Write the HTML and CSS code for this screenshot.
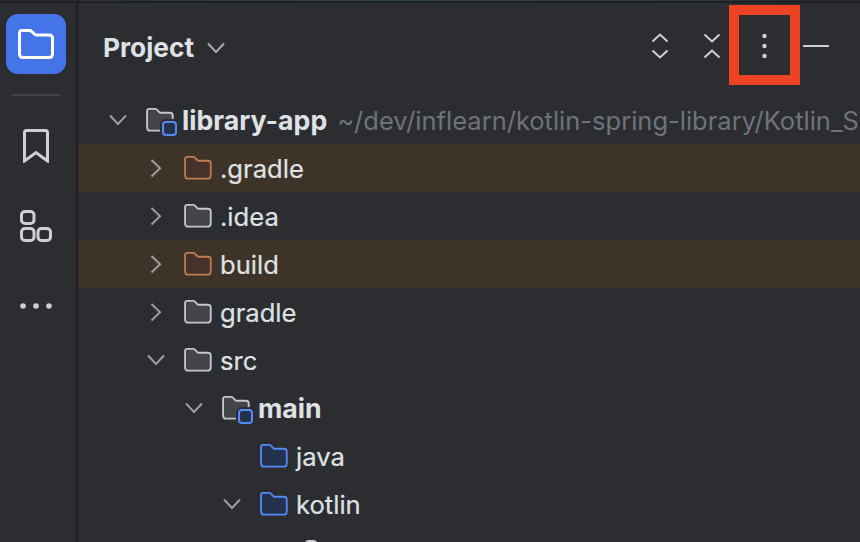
FILE: index.html
```html
<!DOCTYPE html>
<html lang="en">
<head>
<meta charset="utf-8">
<title>Project</title>
<link rel="stylesheet" href="styles.css">
</head>
<body>
<svg class="defs" width="0" height="0" aria-hidden="true">
  <defs>
    <symbol id="folder" viewBox="0 0 30 26">
      <path d="M3.2 1h6.4c.8 0 1.4.3 2 .8l2.6 2.7c.4.4.9.6 1.5.6h10.100c1.700 0 3 1.300 3 3V21c0 2-1.400 3.500-3.400 3.500H4.200C2.300 24.500 1 23 1 21V3.200C1 2 2 1 3.200 1Z"/>
    </symbol>
    <symbol id="chev-r" viewBox="0 0 12 20">
      <path d="M1.500 2 10 10.200 1.500 18.500"/>
    </symbol>
    <symbol id="chev-d" viewBox="0 0 20 12">
      <path d="M2 1.500 10 10 18 1.500"/>
    </symbol>
  </defs>
</svg>
<div class="topline"></div>
<div class="app">
  <aside class="rail">
    <button class="rail-active" type="button" aria-label="Project">
      <svg class="rail-folder" viewBox="0 0 36 30"><path d="M4 1.500h7.600c.8 0 1.400.3 2 .8l3 3c.5.500 1 .7 1.700.7H31c2.200 0 3.500 1.300 3.500 3.500v15.500c0 2.200-1.300 3.500-3.500 3.500H5c-2.200 0-3.500-1.300-3.500-3.500V4c0-1.500 1-2.500 2.500-2.500Z"/></svg>
    </button>
    <div class="rail-sep"></div>
    <svg class="rail-icon bookmark" viewBox="0 0 26 34"><path d="M1.500 3.500c0-1.100.9-2 2-2h19c1.100 0 2 .9 2 2V32L13 23.500 1.500 32Z"/></svg>
    <svg class="rail-icon structure" viewBox="0 0 32 32"><rect x="1.500" y="1.500" width="12.500" height="12" rx="3.500"/><rect x="1.500" y="18.500" width="12.500" height="12" rx="3.500"/><rect x="18" y="18.500" width="12.500" height="12" rx="3.500"/></svg>
    <svg class="rail-icon more" viewBox="0 0 32 6"><circle cx="3" cy="3" r="2.800"/><circle cx="16" cy="3" r="2.800"/><circle cx="29" cy="3" r="2.800"/></svg>
  </aside>
  <main class="panel">
    <header class="head">
      <span class="title">Project</span>
      <svg class="title-chev"><use href="#chev-d"/></svg>
      <span class="spacer"></span>
      <span class="slot"><svg class="tool" viewBox="0 0 18 26"><path d="M1.500 8.500 9 1.500l7.500 7M1.500 17.500l7.500 7 7.500-7"/></svg></span>
      <span class="slot"><svg class="tool" viewBox="0 0 18 26"><path d="M1.500 1.500 9 8.500l7.500-7M1.500 24.500 9 17.500l7.500 7"/></svg></span>
      <span class="slot">
        <svg class="dots" viewBox="0 0 5 26"><circle cx="2.500" cy="3" r="2.200"/><circle cx="2.500" cy="13" r="2.200"/><circle cx="2.500" cy="23" r="2.200"/></svg>
        <span class="callout"></span>
      </span>
      <span class="slot"><span class="minimize"></span></span>
    </header>
    <div class="tree">
      <div class="row lvl-0">
        <svg class="chev-d"><use href="#chev-d"/></svg>
        <span class="icon-wrap"><svg class="folder plain"><use href="#folder"/></svg><span class="badge"></span></span>
        <span class="name bold">library-app</span>
        <span class="path">~/dev/inflearn/kotlin-spring-library/Kotlin_S</span>
      </div>
      <div class="row lvl-1 excluded">
        <svg class="chev-r"><use href="#chev-r"/></svg>
        <svg class="folder orange"><use href="#folder"/></svg>
        <span class="name">.gradle</span>
      </div>
      <div class="row lvl-1">
        <svg class="chev-r"><use href="#chev-r"/></svg>
        <svg class="folder plain"><use href="#folder"/></svg>
        <span class="name">.idea</span>
      </div>
      <div class="row lvl-1 excluded">
        <svg class="chev-r"><use href="#chev-r"/></svg>
        <svg class="folder orange"><use href="#folder"/></svg>
        <span class="name">build</span>
      </div>
      <div class="row lvl-1">
        <svg class="chev-r"><use href="#chev-r"/></svg>
        <svg class="folder plain"><use href="#folder"/></svg>
        <span class="name">gradle</span>
      </div>
      <div class="row lvl-1">
        <svg class="chev-d"><use href="#chev-d"/></svg>
        <svg class="folder plain"><use href="#folder"/></svg>
        <span class="name">src</span>
      </div>
      <div class="row lvl-2">
        <svg class="chev-d"><use href="#chev-d"/></svg>
        <span class="icon-wrap"><svg class="folder plain"><use href="#folder"/></svg><span class="badge"></span></span>
        <span class="name bold">main</span>
      </div>
      <div class="row lvl-3">
        <span class="chev-gap"></span>
        <svg class="folder blue"><use href="#folder"/></svg>
        <span class="name">java</span>
      </div>
      <div class="row lvl-3">
        <svg class="chev-d"><use href="#chev-d"/></svg>
        <svg class="folder blue"><use href="#folder"/></svg>
        <span class="name">kotlin</span>
      </div>
      <div class="row lvl-4">
        <span class="chev-gap"></span>
        <span class="package"></span>
      </div>
    </div>
  </main>
</div>
</body>
</html>
```
FILE: styles.css
```css
* { box-sizing: border-box; }
html, body { margin: 0; height: 100%; }
body {
  width: 860px;
  height: 542px;
  overflow: hidden;
  background: #2b2d30;
  font-family: Inter, "Liberation Sans", sans-serif;
  color: #dfe1e5;
}
.defs { position: absolute; }
.topline {
  height: 1px;
  background: linear-gradient(90deg, #272a2c 0%, #2f4644 45%, #2c3a3a 75%, #272a2c 100%);
}
.app {
  display: flex;
  height: 541px;
  border-top: 2px solid #1e1f22;
}
.rail {
  flex: 0 0 78px;
  border-right: 2px solid #1e1f22;
  display: flex;
  flex-direction: column;
  align-items: center;
  padding: 11px 4px 0 0;
}
.rail-active {
  flex: none;
  width: 60px;
  height: 60px;
  padding: 0;
  border: 0;
  border-radius: 12px;
  background: #4374e8;
  display: flex;
  align-items: center;
  justify-content: center;
}
.rail-folder {
  width: 36px;
  height: 30px;
  fill: none;
  stroke: #fff;
  stroke-width: 3;
}
.rail-sep {
  flex: none;
  width: 48px;
  height: 2px;
  background: #43454a;
  margin-top: 20px;
}
.rail-icon {
  flex: none;
  fill: none;
  stroke: #ced0d6;
  stroke-width: 3;
}
.bookmark { width: 26px; height: 34px; margin-top: 33px; }
.structure { width: 32px; height: 32px; margin-top: 47px; }
.more { width: 32px; height: 6px; margin-top: 61px; fill: #ced0d6; stroke: none; }
.panel { flex: 1; min-width: 0; display: flex; flex-direction: column; }
.head {
  flex: 0 0 93px;
  display: flex;
  align-items: center;
  padding: 0 18px 7px 25px;
}
.title {
  font-size: 26.300px;
  font-weight: 700;
  color: #dfe1e5;
  margin-top: 2px;
}
.title-chev {
  flex: none;
  width: 20px;
  height: 12px;
  margin: 3px 0 0 12px;
  fill: none;
  stroke: #a8abb0;
  stroke-width: 2;
}
.spacer { flex: 1; }
.slot {
  position: relative;
  flex: 0 0 52px;
  height: 26px;
  display: flex;
  align-items: center;
  justify-content: center;
}
.tool {
  width: 18px;
  height: 26px;
  fill: none;
  stroke: #ced0d6;
  stroke-width: 2;
}
.dots { width: 5px; height: 26px; fill: #ced0d6; }
.callout {
  position: absolute;
  left: -9px;
  top: -28px;
  width: 71px;
  height: 80px;
  border: 10px solid #ee4225;
}
.minimize { width: 26px; height: 2px; background: #ced0d6; }
.tree { flex: 1; overflow: hidden; }
.row {
  height: 48px;
  display: flex;
  align-items: center;
  white-space: nowrap;
  overflow: hidden;
}
.excluded { background: #3e3328; }
.lvl-0 { padding-left: 30px; }
.lvl-1 { padding-left: 68px; }
.lvl-2 { padding-left: 106px; }
.lvl-3 { padding-left: 144px; }
.lvl-4 { padding-left: 182px; }
.chev-r {
  flex: none;
  width: 12px;
  height: 20px;
  fill: none;
  stroke: #9a9da3;
  stroke-width: 2;
  margin: 0 22px 0 4px;
}
.chev-d {
  flex: none;
  width: 20px;
  height: 12px;
  fill: none;
  stroke: #9a9da3;
  stroke-width: 2;
  margin-right: 18px;
}
.chev-gap { width: 38px; flex: none; }
.folder {
  display: block;
  width: 28px;
  height: 24px;
  flex: none;
  stroke-width: 2;
}
.plain { fill: #43454a; stroke: #c4c6cc; }
.orange { fill: #45322b; stroke: #c07b55; }
.blue { fill: #25324d; stroke: #548af7; }
.icon-wrap { position: relative; width: 28px; height: 24px; flex: none; }
.badge {
  position: absolute;
  left: 16px;
  top: 13px;
  width: 15px;
  height: 15px;
  border: 2px solid #548af7;
  border-radius: 4px;
  background: #25324d;
  box-shadow: 0 0 0 2px #2b2d30;
}
.name {
  font-size: 25.600px;
  margin-left: 8px;
  color: #dfe1e5;
  -webkit-text-stroke: 0.2px #dfe1e5;
}
.bold { font-size: 26.700px; font-weight: 700; -webkit-text-stroke: 0; }
.path { font-size: 25.500px; color: #6f737a; margin-left: 10px; }
.package {
  flex: none;
  width: 14px;
  height: 24px;
  border: 2px solid #ced0d6;
  border-radius: 5px;
  background: #43454a;
  margin: 0 0 0 6px;
}
```
